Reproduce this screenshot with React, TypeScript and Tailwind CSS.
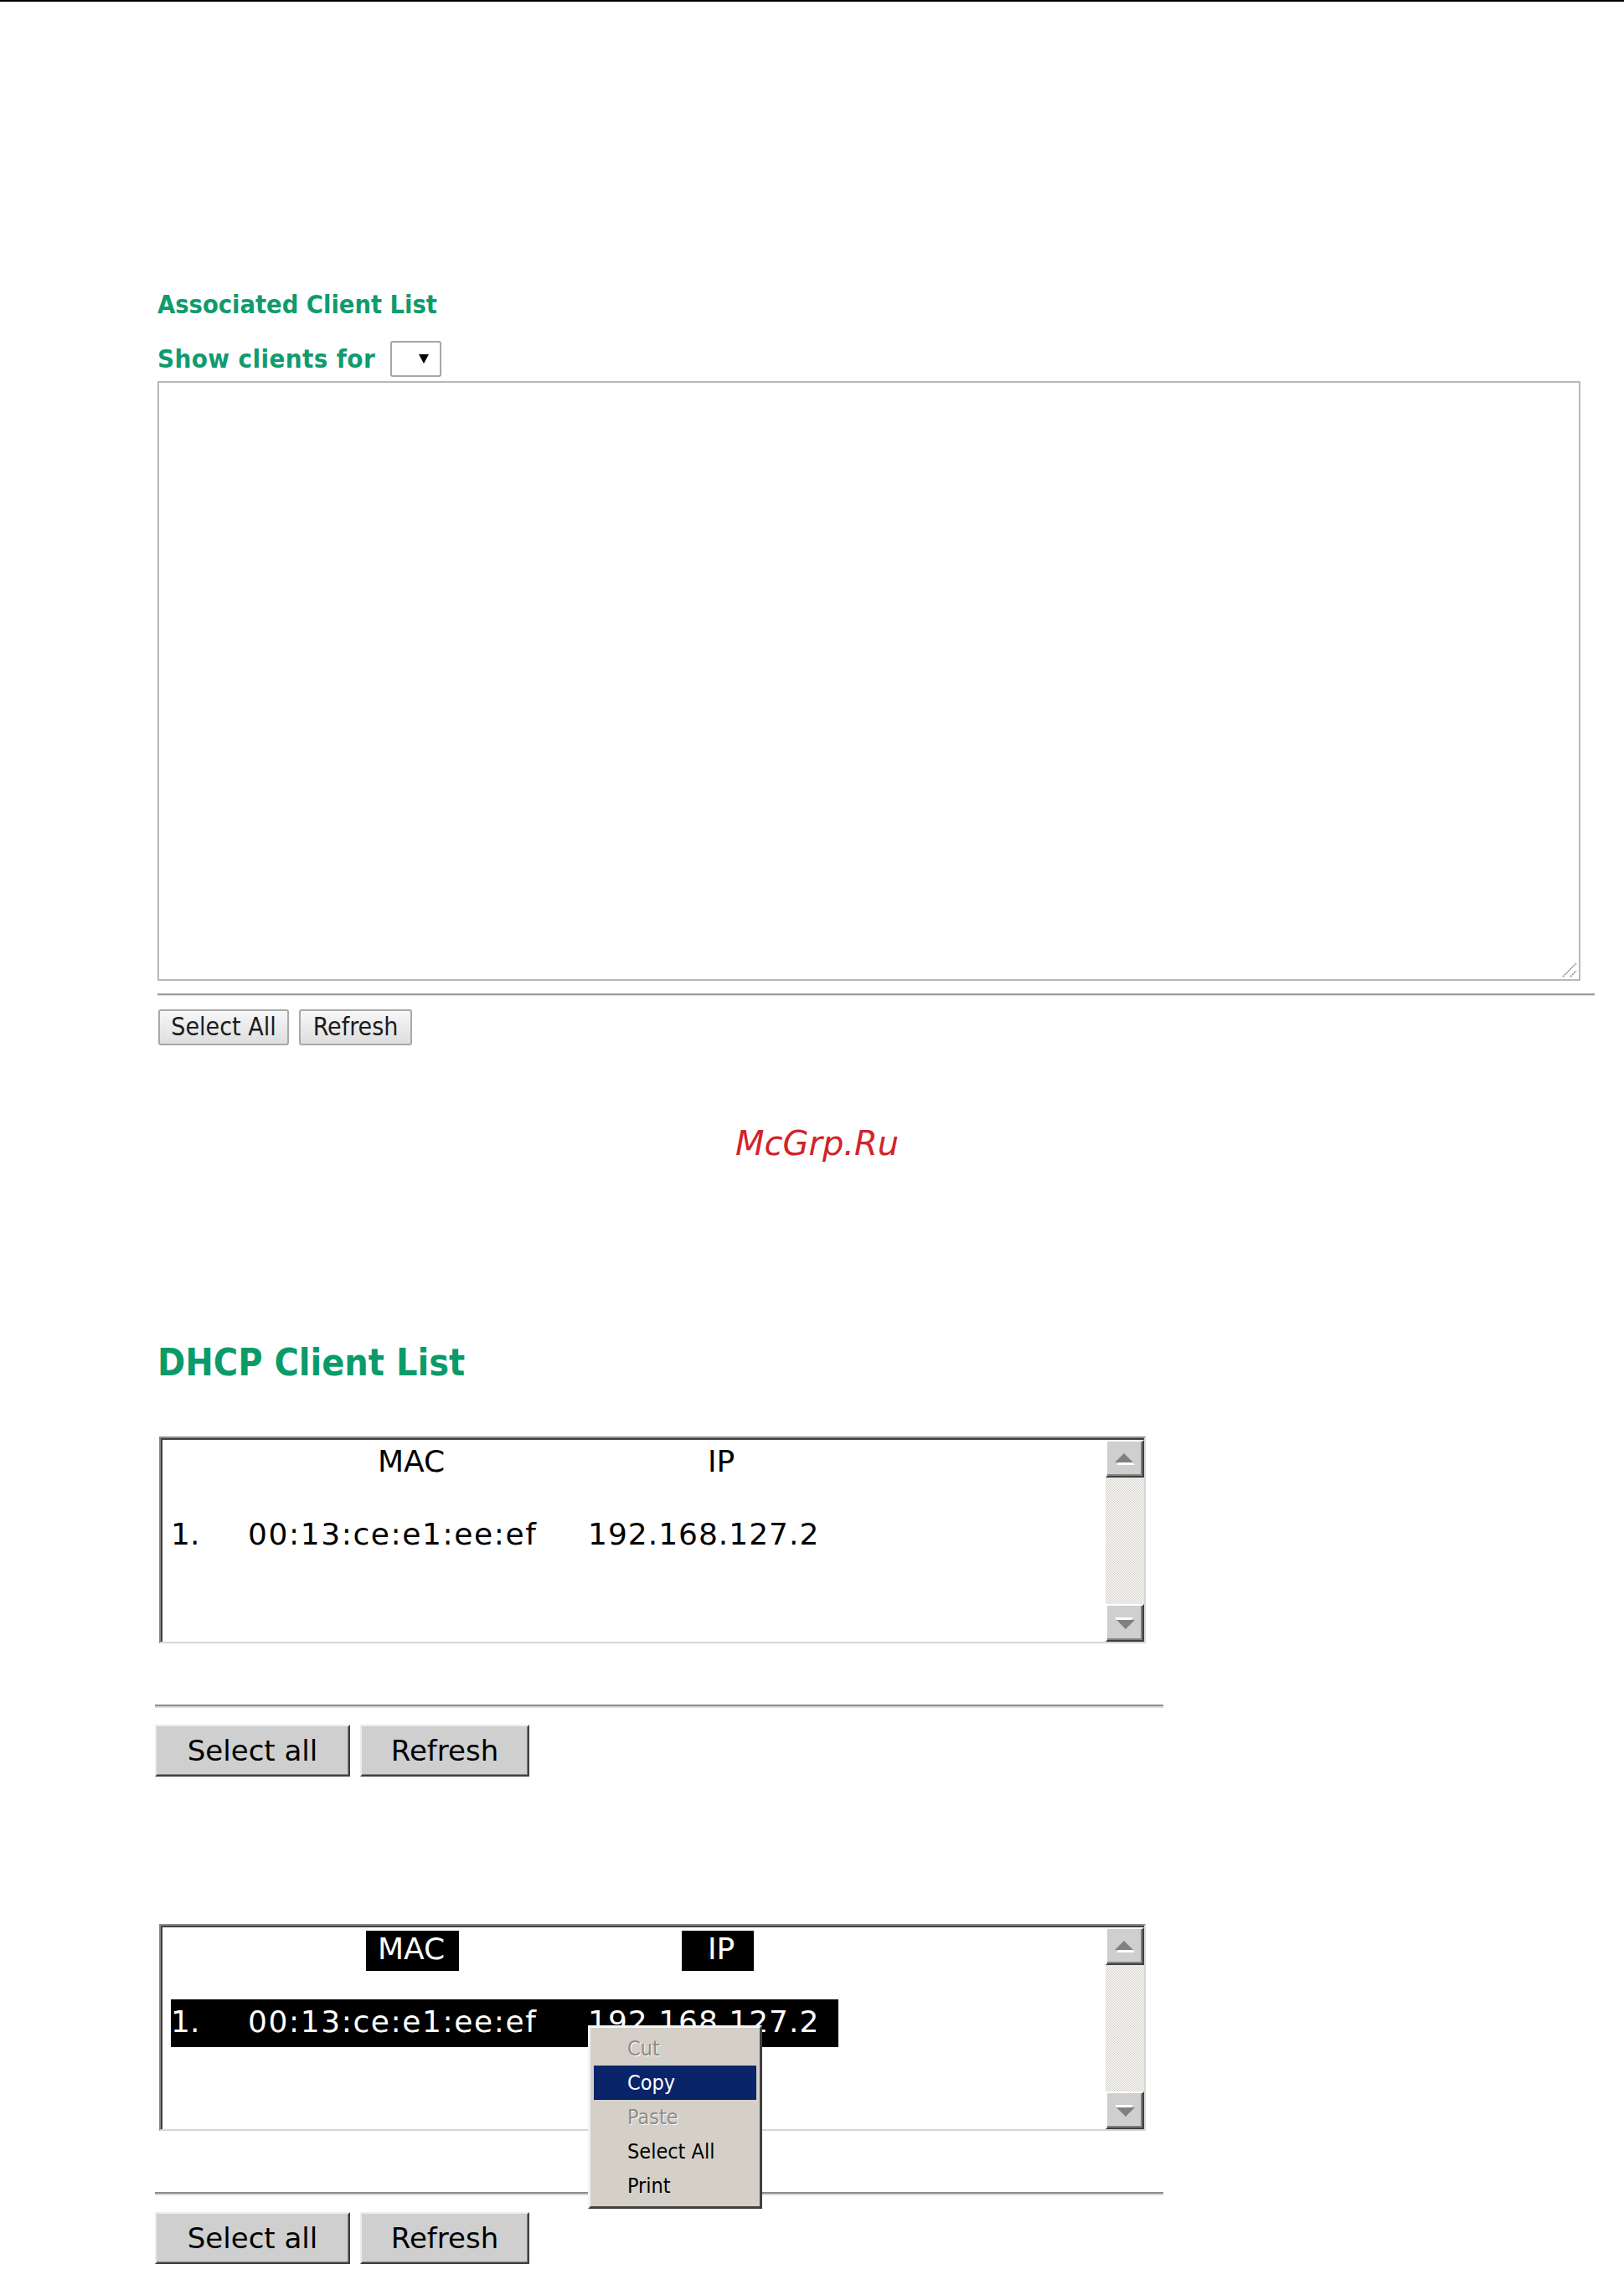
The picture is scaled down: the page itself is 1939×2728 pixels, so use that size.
import React from "react"

const tahoma = "font-['DejaVu_Sans_Condensed','DejaVu_Sans',sans-serif]"

function ArrowButton({ down }: { down?: boolean }) {
  return (
    <div className="flex h-[45px] w-full items-center justify-center border-2 border-t-white border-l-white border-r-[#404040] border-b-[#404040] bg-[#cfcfcf] shadow-[inset_-2px_-2px_0_#808080]">
      <svg width="26" height="16" viewBox="0 0 26 16" className={down ? "rotate-180" : ""}>
        <polygon points="14,3 25,15 3,15" fill="#ffffff" />
        <polygon points="12,1 23,12 1,12" fill="#808080" />
      </svg>
    </div>
  )
}

function Scrollbar() {
  return (
    <div className="flex h-full w-[46px] flex-col">
      <ArrowButton />
      <div className="flex-1 bg-[image:repeating-conic-gradient(#d4d0c8_0_25%,#ffffff_0_50%)] bg-[length:2px_2px]" />
      <ArrowButton down />
    </div>
  )
}

function ContextMenu() {
  const items = [
    { label: "Cut", state: "disabled" },
    { label: "Copy", state: "active" },
    { label: "Paste", state: "disabled" },
    { label: "Select All", state: "normal" },
    { label: "Print", state: "normal" },
  ]
  return (
    <div className={`absolute left-[510px] top-[119px] z-10 w-[208px] border-[3px] border-t-[#f4f4f4] border-l-[#f4f4f4] border-r-[#404040] border-b-[#404040] bg-[#d4d0c8] p-[4px] ${tahoma} text-[25px]`}>
      {items.map((item) => (
        <div
          key={item.label}
          className={`h-[41px] pl-[40px] leading-[41px] ${
            item.state === "active"
              ? "bg-[#0a246a] text-white"
              : item.state === "disabled"
              ? "text-[#8c8c8c] [text-shadow:1px_1px_0_#ffffff]"
              : "text-black"
          }`}
        >
          {item.label}
        </div>
      ))}
    </div>
  )
}

function ClientBox({ selected }: { selected?: boolean }) {
  const hl = selected ? "bg-black text-white" : "text-black"
  return (
    <div className="relative ml-[2px] h-[247px] w-[1178px] border-2 border-t-[#8a8a8a] border-l-[#8a8a8a] border-r-[#d6d6d6] border-b-[#d6d6d6]">
      <div className="flex h-full border-t-2 border-l-2 border-[#404040]">
        <div className="flex-1 font-['DejaVu_Sans',sans-serif] text-[36px]">
          <div className="mt-[4px] flex h-[48px]">
            <span className={`ml-[243px] inline-block h-[48px] w-[111px] pl-[14px] leading-[43px] ${hl}`}>MAC</span>
            <span className={`ml-[266px] inline-block h-[48px] w-[86px] pl-[31px] leading-[43px] ${hl}`}>IP</span>
          </div>
          <div className={`ml-[10px] mt-[34px] flex h-[57px] w-[797px] leading-[53px] ${hl}`}>
            <span className="w-[92px] shrink-0">1.</span>
            <span className="w-[406px] shrink-0 tracking-[1.6px]">00:13:ce:e1:ee:ef</span>
            <span className="tracking-[1px]">192.168.127.2</span>
          </div>
        </div>
        <Scrollbar />
      </div>
      {selected && <ContextMenu />}
    </div>
  )
}

function ClassicButtons() {
  return (
    <div className="-ml-[3px] mt-[20px] flex gap-[12px] font-['DejaVu_Sans',sans-serif] text-[34px] leading-none text-black">
      <button className="h-[62px] w-[233px] border-2 border-t-[#ececec] border-l-[#ececec] border-r-[#404040] border-b-[#404040] bg-[#cfcfcf] shadow-[inset_-1px_-1px_0_#808080]">
        Select all
      </button>
      <button className="h-[62px] w-[202px] border-2 border-t-[#ececec] border-l-[#ececec] border-r-[#404040] border-b-[#404040] bg-[#cfcfcf] shadow-[inset_-1px_-1px_0_#808080]">
        Refresh
      </button>
    </div>
  )
}

function ClassicRule() {
  return <div className="-ml-[3px] mt-[73px] h-[4px] w-[1204px] border-t-2 border-b-2 border-t-[#8c8c8c] border-b-[#dadada]" />
}

export default function App() {
  return (
    <div className="min-h-[2728px] w-full bg-white">
      <div className="h-[2px] bg-black" />
      <div className="pl-[188px]">
        {/* Associated clients */}
        <h2 className={`mt-[347px] ${tahoma} text-[30.5px] font-bold leading-none text-[#119a6e]`}>
          Associated Client List
        </h2>
        <div className="mt-[27px] flex items-start">
          <span className={`mt-[6px] w-[278px] ${tahoma} text-[31px] font-bold leading-none tracking-[0.4px] text-[#119a6e]`}>
            Show clients for
          </span>
          <div className="flex h-[43px] w-[61px] items-center justify-end rounded-[3px] border-2 border-[#a6a6a6] bg-white pr-[13px]">
            <svg width="12" height="11" viewBox="0 0 12 11">
              <polygon points="0,0 12,0 6,11" fill="#000000" />
            </svg>
          </div>
        </div>
        <div className="relative mt-[5px] h-[716px] w-[1699px]">
          <textarea
            readOnly
            className="block h-full w-full resize-none border-2 border-[#b8b8b8] bg-white outline-none"
          />
          <svg className="absolute bottom-[4px] right-[4px]" width="18" height="18" viewBox="0 0 18 18">
            <line x1="1" y1="17" x2="17" y2="1" stroke="#8a8a8a" strokeWidth="1.6" strokeDasharray="2 1" />
            <line x1="10" y1="17" x2="17" y2="10" stroke="#8a8a8a" strokeWidth="1.6" strokeDasharray="2 1" />
          </svg>
        </div>
        <div className="mt-[15px] h-[3px] w-[1716px] border-t-2 border-b border-t-[#9c9c9c] border-b-[#e2e2e2]" />
        <div className={`ml-[1px] mt-[16px] flex gap-[12px] ${tahoma} text-[30px] leading-none text-[#1c1c1c]`}>
          <button className="h-[43px] w-[156px] rounded-[3px] border-2 border-[#a9a9a9] bg-gradient-to-b from-[#f7f7f7] to-[#dedede]">
            Select All
          </button>
          <button className="h-[43px] w-[135px] rounded-[3px] border-2 border-[#a9a9a9] bg-gradient-to-b from-[#f7f7f7] to-[#dedede]">
            Refresh
          </button>
        </div>

        {/* watermark */}
        <div className="ml-[690px] mt-[97px] font-['DejaVu_Sans',sans-serif] text-[40px] italic leading-none text-[#d3232b]">
          McGrp.Ru
        </div>

        {/* DHCP clients */}
        <h2 className={`mt-[220px] ${tahoma} text-[44.5px] font-bold leading-none text-[#0b9a6a]`}>
          DHCP Client List
        </h2>
        <div className="mt-[66px]">
          <ClientBox />
        </div>
        <ClassicRule />
        <ClassicButtons />

        <div className="mt-[176px]">
          <ClientBox selected />
        </div>
        <ClassicRule />
        <ClassicButtons />
      </div>
    </div>
  )
}
